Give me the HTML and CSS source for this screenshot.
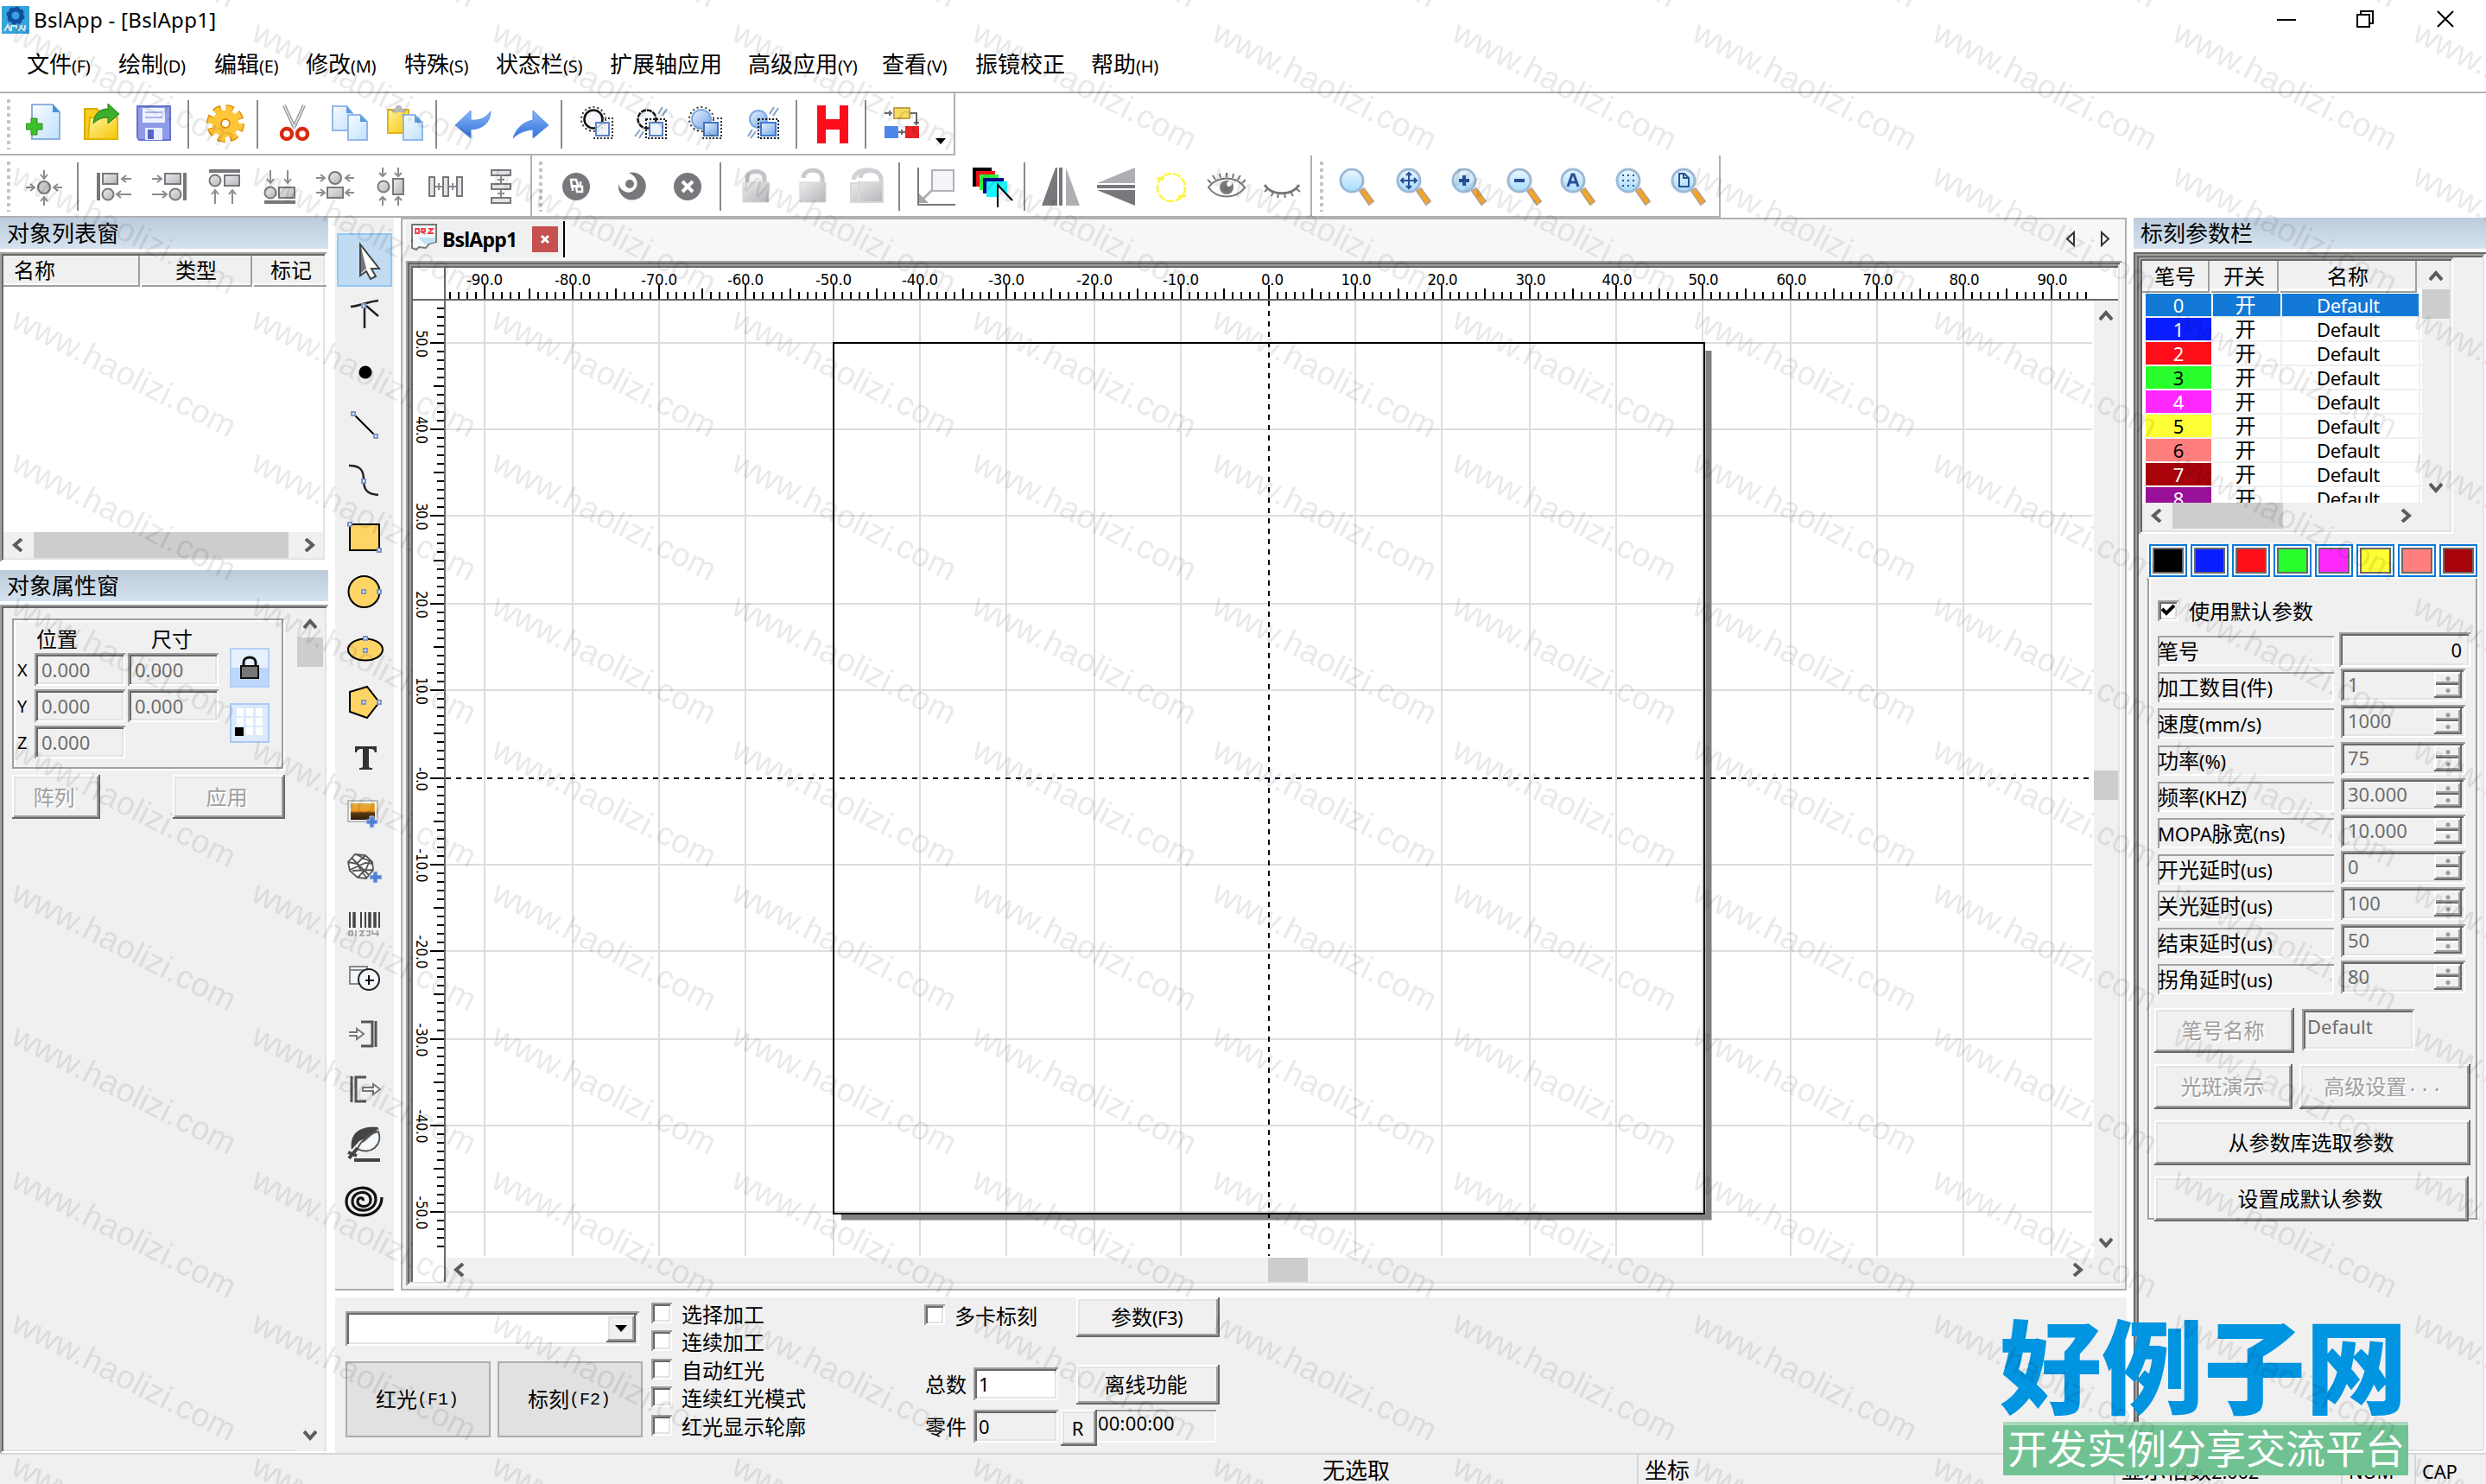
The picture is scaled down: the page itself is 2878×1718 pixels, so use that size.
FILE: index.html
```html
<!DOCTYPE html>
<html lang="zh-CN">
<head>
<meta charset="utf-8">
<title>BslApp - [BslApp1]</title>
<link rel="stylesheet" href="styles.css">
</head>
<body>
<svg width="0" height="0" class="defs">
  <defs>
    <linearGradient id="lens" x1="0" y1="0" x2="0" y2="1"><stop offset="0" stop-color="#eaf7ff"/><stop offset="1" stop-color="#a5dcfb"/></linearGradient>
    <linearGradient id="sheet" x1="0" y1="0" x2="1" y2="1"><stop offset="0" stop-color="#fafdff"/><stop offset="1" stop-color="#bfe0ff"/></linearGradient>
    <linearGradient id="gold" x1="0" y1="0" x2="1" y2="1"><stop offset="0" stop-color="#fff3a0"/><stop offset="1" stop-color="#f7c600"/></linearGradient>
    <linearGradient id="blue" x1="0" y1="0" x2="0" y2="1"><stop offset="0" stop-color="#8ab8fb"/><stop offset="1" stop-color="#2f6fd6"/></linearGradient>
    <linearGradient id="sky" x1="0" y1="0" x2="1" y2="1"><stop offset="0" stop-color="#eaf3fe"/><stop offset="1" stop-color="#6fa3ea"/></linearGradient>
    <linearGradient id="steel" x1="0" y1="0" x2="1" y2="1"><stop offset="0" stop-color="#ececee"/><stop offset="1" stop-color="#b4b5b8"/></linearGradient>
    <linearGradient id="sunset" x1="0" y1="0" x2="0" y2="1"><stop offset="0" stop-color="#e0b040"/><stop offset=".45" stop-color="#f59a20"/><stop offset=".6" stop-color="#5a3a10"/><stop offset="1" stop-color="#2a1c0c"/></linearGradient>
    <symbol id="mag" viewBox="0 0 44 46" overflow="visible">
      <path d="M24 27l5-3 11 15-5 4z" fill="#f9a51a" stroke="#b9a38a" stroke-width="2"/>
      <circle cx="15" cy="15" r="13" fill="url(#lens)" stroke="#9db9d6" stroke-width="3"/>
    </symbol>
    <symbol id="hd" viewBox="0 0 6 6"><path d="M1 1h4v4h-4z" fill="#fff" stroke="#7a96d2" stroke-width="2"/></symbol>
  </defs>
</svg>

<header class="titlebar">
  <svg class="logo" width="32" height="32" viewBox="0 0 32 32"><path fill="#35a3dc" d="M0 0h32v32H0z"/><circle cx="16" cy="11" r="7" fill="none" stroke="#124f9c" stroke-width="5"/><circle cx="16" cy="11" r="9" fill="none" stroke="#124f9c" stroke-width="3" stroke-dasharray="4 3"/><path d="M3 29l4-7 3 7M11 22v7M12 23h5v3M19 29l5-7M21 23l6 6M27 22v5" stroke="#d5e4ee" stroke-width="2" fill="none"/></svg>
  <span class="caption">BslApp - [BslApp1]</span>
  <svg class="winbtns" width="220" height="30" viewBox="2634 8 220 30" fill="none" stroke="#000" stroke-width="2"><path d="M2636 23h22"/><path d="M2729 17h14v14h-14zM2733 17v-4h14v14h-4"/><path d="M2822 13l18 18M2840 13l-18 18"/></svg>
</header>

<nav class="menubar">
  <span>文件<small>(F)</small></span><span>绘制<small>(D)</small></span><span>编辑<small>(E)</small></span><span>修改<small>(M)</small></span><span>特殊<small>(S)</small></span><span>状态栏<small>(S)</small></span><span>扩展轴应用</span><span>高级应用<small>(Y)</small></span><span>查看<small>(V)</small></span><span>振镜校正</span><span>帮助<small>(H)</small></span>
</nav>

<div class="toolbar main-tools">
  <i class="grip"></i>
  <svg width="44" height="56" viewBox="30 116 44 56"><path d="M37 121h24l8 9v31H37z" fill="url(#sheet)" stroke="#8fb0dc" stroke-width="2"/><path d="M61 121v9h8z" fill="#4a90d9"/><path d="M36 137h7v6h6v7h-6v6h-7v-6h-6v-7h6z" fill="#3fc02d" stroke="#2a8d1e"/></svg>
  <svg width="46" height="56" viewBox="96 116 46 56"><path d="M98 126h14l4 4h18v31H98z" fill="#f7cf1d" stroke="#d9a800" stroke-width="2"/><path d="M104 136h32v25h-34z" fill="url(#gold)" stroke="#e2b400" stroke-width="2"/><path d="M108 143c1-12 8-17 17-17v-6l13 12-13 11v-7c-7 0-12 2-17 7z" fill="#3cae2c" stroke="#217a18"/></svg>
  <svg width="44" height="56" viewBox="156 116 44 56"><path d="M159 123h38v39h-36l-2-3z" fill="#8f9be6" stroke="#6673cc" stroke-width="2"/><path d="M165 125h26v17h-26z" fill="#eef2ff"/><path d="M168 130h20M168 136h20" stroke="#a9b4ee" stroke-width="2"/><path d="M168 148h20v14h-20z" fill="#e8ecff"/><path d="M171 150h7v11h-7z" fill="#5663c8"/></svg>
  <i class="sep"></i>
  <svg width="50" height="56" viewBox="236 116 50 56"><circle cx="261" cy="143" r="17" fill="none" stroke="#e08a00" stroke-width="10" stroke-dasharray="8 5.35"/><circle cx="261" cy="143" r="17" fill="none" stroke="#ffc63a" stroke-width="7" stroke-dasharray="7 6.35"/><circle cx="261" cy="143" r="10.500" fill="none" stroke="#ffc63a" stroke-width="10"/><circle cx="261" cy="143" r="5" fill="#fff" stroke="#e08a00" stroke-width="2"/></svg>
  <i class="sep"></i>
  <svg width="44" height="56" viewBox="320 116 44 56"><path d="M329 122l12 26M352 122l-12 26" stroke="#8e8e8e" stroke-width="4"/><path d="M329 122l12 26M352 122l-12 26" stroke="#eee" stroke-width="1.500"/><circle cx="332" cy="155" r="6" fill="none" stroke="#d92a10" stroke-width="4.500"/><circle cx="350" cy="155" r="6" fill="none" stroke="#d92a10" stroke-width="4.500"/></svg>
  <svg width="48" height="56" viewBox="382 116 48 56"><path d="M385 123h16l7 8v20h-23z" fill="url(#sheet)" stroke="#93b7e8" stroke-width="2"/><path d="M403 133h14l8 8v21h-22z" fill="url(#sheet)" stroke="#93b7e8" stroke-width="2"/><path d="M401 122v9h7zM417 133v8h8z" fill="#5b9be4"/></svg>
  <svg width="48" height="56" viewBox="446 116 48 56"><path d="M449 127h24v27h-24z" fill="url(#gold)" stroke="#e0b21c" stroke-width="2"/><path d="M454 130c0-5 4-3 5-8h5c1 5 5 3 5 8z" fill="#b9b9b9"/><path d="M467 133h13l9 9v20h-22z" fill="url(#sheet)" stroke="#93b7e8" stroke-width="2"/><path d="M480 133v9h9z" fill="#5b9be4"/></svg>
  <i class="sep"></i>
  <svg width="48" height="56" viewBox="524 116 48 56"><path d="M527 145l18-17v11c10 1 17-2 23-10-1 13-8 20-23 21v10z" fill="url(#blue)" stroke="#5b8fe6"/></svg>
  <svg width="48" height="56" viewBox="590 116 48 56"><path d="M635 145l-18-17v11c-10 2-19 8-23 21 6-6 13-9 23-10v10z" fill="url(#blue)" stroke="#5b8fe6"/></svg>
  <i class="sep"></i>
  <svg width="44" height="56" viewBox="669 116 44 56"><circle cx="687" cy="138" r="14" fill="none" stroke="#333" stroke-width="2" stroke-dasharray="2 3"/><circle cx="687" cy="138" r="10.500" fill="#f3f6fb" stroke="#111" stroke-width="2.500"/><path d="M690 142h15v15h-15z" fill="#eaf1fb" fill-opacity=".8" stroke="#5a84c4" stroke-width="2"/><path d="M704 137h5v23h-24" fill="none" stroke="#333" stroke-width="2" stroke-dasharray="2 2"/></svg>
  <svg width="44" height="56" viewBox="733 116 44 56"><circle cx="749" cy="138" r="10.500" fill="#f3f6fb" stroke="#111" stroke-width="2.500" stroke-dasharray="6 1"/><path d="M752 142h15v15h-15z" fill="#eaf1fb" stroke="#5a84c4" stroke-width="2"/><path d="M748 138h23v22h-23z" fill="none" stroke="#111" stroke-width="2" stroke-dasharray="2 2"/><path d="M767 124l-5 8M772 126l-5 8M741 150l-6 8M745 152l-5 8" stroke="#86a0c8" stroke-width="2"/></svg>
  <svg width="44" height="56" viewBox="795 116 44 56"><circle cx="812" cy="138" r="14" fill="none" stroke="#333" stroke-width="2" stroke-dasharray="2 3"/><circle cx="812" cy="138" r="11" fill="url(#sky)" stroke="#7da9e6" stroke-width="2"/><path d="M815 142h16v15h-16z" fill="url(#sky)" stroke="#4672b8" stroke-width="2"/><path d="M830 137h5v23h-24" fill="none" stroke="#333" stroke-width="2" stroke-dasharray="2 2"/></svg>
  <svg width="44" height="56" viewBox="863 116 44 56"><circle cx="878" cy="138" r="10" fill="url(#sky)" stroke="#7da9e6" stroke-width="2"/><path d="M881 142h17v15h-17z" fill="url(#sky)" stroke="#3f78cf" stroke-width="2"/><path d="M878 138h23v22h-23z" fill="none" stroke="#111" stroke-width="2" stroke-dasharray="2 2"/><path d="M896 124l-5 8M901 125l-6 9M871 150l-5 8M875 152l-6 8" stroke="#86a0c8" stroke-width="2"/></svg>
  <i class="sep"></i>
  <svg width="44" height="56" viewBox="942 116 44 56"><path d="M946 122h10v16h16v-16h10v44h-10v-16h-16v16h-10z" fill="#fb0d1b"/></svg>
  <i class="sep"></i>
  <svg width="78" height="56" viewBox="1022 116 78 56"><path d="M1035 125h18v12h-18z" fill="#f8dd5d" stroke="#c7a04c" stroke-width="2"/><path d="M1024 146h16v14h-16z" fill="#4f86ea"/><path d="M1048 146h16v14h-16z" fill="#ea2323"/><path d="M1024 131h9M1030 128v6M1054 131h7v14M1040 153h8M1044 150v6M1058 142h6" stroke="#666" stroke-width="2" fill="none"/><path d="M1083 160h12l-6 7z" fill="#000"/></svg>
</div>

<div class="toolbar-row">
<div class="toolbar align-tools">
  <i class="grip"></i>
  <svg width="46" height="56" viewBox="28 188 46 56"><circle cx="51" cy="217" r="7" fill="#c9cacc" stroke="#77787b" stroke-width="2"/><path d="M51 197v9M47 202l4 5 4-5M51 238v-9M47 233l4-5 4 5M30 217h9M35 213l5 4-5 4M72 217h-9M67 213l-5 4 5 4" fill="none" stroke="#8b8c8f" stroke-width="2"/></svg>
  <i class="sep"></i>
  <svg width="46" height="56" viewBox="111 188 46 56"><path d="M114 200v32" stroke="#77787b" stroke-width="4"/><path d="M119 201h17v12h-17z" fill="url(#steel)" stroke="#77787b" stroke-width="2"/><circle cx="125" cy="225" r="6.500" fill="url(#steel)" stroke="#77787b" stroke-width="2"/><path d="M152 207h-10M146 203l-5 4 5 4M152 225h-16M140 221l-5 4 5 4" fill="none" stroke="#8b8c8f" stroke-width="2"/></svg>
  <svg width="46" height="56" viewBox="174 188 46 56"><path d="M214 200v32" stroke="#77787b" stroke-width="4"/><path d="M191 201h18v12h-18z" fill="url(#steel)" stroke="#77787b" stroke-width="2"/><circle cx="203" cy="225" r="6.500" fill="url(#steel)" stroke="#77787b" stroke-width="2"/><path d="M176 207h10M182 203l5 4-5 4M176 225h16M188 221l5 4-5 4" fill="none" stroke="#8b8c8f" stroke-width="2"/></svg>
  <svg width="46" height="56" viewBox="240 188 46 56"><path d="M242 198h36" stroke="#77787b" stroke-width="4"/><path d="M260 203h17v12h-17z" fill="url(#steel)" stroke="#77787b" stroke-width="2"/><circle cx="249" cy="209" r="6.500" fill="url(#steel)" stroke="#77787b" stroke-width="2"/><path d="M249 236v-14M245 225l4-5 4 5M269 236v-14M265 225l4-5 4 5" fill="none" stroke="#8b8c8f" stroke-width="2"/></svg>
  <svg width="46" height="56" viewBox="303 188 46 56"><path d="M306 234h36" stroke="#77787b" stroke-width="4"/><path d="M323 217h18v12h-18z" fill="url(#steel)" stroke="#77787b" stroke-width="2"/><circle cx="313" cy="223" r="6.500" fill="url(#steel)" stroke="#77787b" stroke-width="2"/><path d="M313 197v14M309 207l4 5 4-5M333 197v14M329 207l4 5 4-5" fill="none" stroke="#8b8c8f" stroke-width="2"/></svg>
  <svg width="50" height="56" viewBox="364 188 50 56"><circle cx="388" cy="206" r="7" fill="url(#steel)" stroke="#77787b" stroke-width="2"/><path d="M379 217h18v12h-18z" fill="url(#steel)" stroke="#77787b" stroke-width="2"/><path d="M366 206h9M371 202l5 4-5 4M410 206h-9M405 202l-5 4 5 4M366 223h9M371 219l5 4-5 4M410 223h-9M405 219l-5 4 5 4" fill="none" stroke="#8b8c8f" stroke-width="2"/></svg>
  <svg width="46" height="56" viewBox="433 188 46 56"><circle cx="444" cy="216" r="6.500" fill="url(#steel)" stroke="#77787b" stroke-width="2"/><path d="M455 207h12v18h-12z" fill="url(#steel)" stroke="#77787b" stroke-width="2"/><path d="M443 194v9M439 200l4 4 4-4M461 194v9M457 200l4 4 4-4M443 238v-9M439 232l4-4 4 4M461 238v-9M457 232l4-4 4 4" fill="none" stroke="#8b8c8f" stroke-width="2"/></svg>
  <svg width="46" height="56" viewBox="493 188 46 56"><path d="M497 205h6v22h-6zM513 205h6v22h-6zM529 205h6v22h-6z" fill="#e4e4e6" stroke="#77787b" stroke-width="2"/><path d="M504 216h8M520 216h8M508 212v8M524 212v8" stroke="#8b8c8f" stroke-width="2"/></svg>
  <svg width="44" height="56" viewBox="560 188 44 56"><path d="M569 197h22v6h-22zM569 213h22v6h-22zM569 229h22v6h-22z" fill="#e4e4e6" stroke="#77787b" stroke-width="2"/><path d="M580 204v8M580 220v8M576 208h8M576 224h8" stroke="#8b8c8f" stroke-width="2"/></svg>
</div>
<div class="toolbar edit-tools">
  <i class="grip"></i>
  <svg width="40" height="56" viewBox="648 188 40 56"><circle cx="667" cy="216" r="16" fill="#77787b"/><path d="M661 208h6l2 6-7 2zM667 216h7v6h-6zM663 214v7M672 210v6" fill="none" stroke="#fff" stroke-width="2.500"/></svg>
  <svg width="40" height="56" viewBox="713 188 40 56"><path d="M728 200a16 16 0 1 1-12 13c2 8 12 13 18 7 6-5 5-15-6-20z" fill="#77787b"/><circle cx="729" cy="213" r="5" fill="#77787b"/></svg>
  <svg width="40" height="56" viewBox="777 188 40 56"><circle cx="796" cy="216" r="16" fill="#77787b"/><path d="M790 210l12 12M802 210l-12 12" stroke="#fff" stroke-width="4"/></svg>
  <i class="sep"></i>
  <svg width="40" height="56" viewBox="856 188 40 56"><path d="M865 212v-6c0-10 20-10 20 0v6" fill="#f6f6f8" stroke="#c3c4c8" stroke-width="5"/><path d="M860 211h30v23h-30z" fill="url(#steel)" stroke="#d5d5d8"/></svg>
  <svg width="40" height="56" viewBox="922 188 40 56"><path d="M930 206c0-12 22-12 22 0v6" fill="none" stroke="#c9cacd" stroke-width="5"/><path d="M926 211h30v23h-30z" fill="url(#steel)" stroke="#d5d5d8"/></svg>
  <svg width="44" height="56" viewBox="982 188 44 56"><path d="M988 208c2-9 10-12 20-11" fill="none" stroke="#d3d4d6" stroke-width="5"/><path d="M996 206c0-12 24-12 24 2v4" fill="none" stroke="#cfd0d3" stroke-width="5"/><path d="M985 212h10v22h-10zM994 211h28v23h-28z" fill="url(#steel)" stroke="#d9d9dc" stroke-width="2"/></svg>
  <i class="sep"></i>
  <svg width="48" height="56" viewBox="1060 188 48 56"><path d="M1063 194v43h43" fill="none" stroke="#77787b" stroke-width="2"/><path d="M1079 197h25v24h-25z" fill="#f4f5f8" stroke="#b0b1b5" stroke-width="2"/><path d="M1079 220l-12 12" stroke="#b0b1b5" stroke-width="3"/><path d="M1064 224v11h11z" fill="#a5a6aa"/></svg>
  <svg width="50" height="56" viewBox="1124 188 50 56"><path d="M1126 194h22v22h-22z"/><path d="M1130 198h22v18h-22z" fill="#fb0d1b"/><path d="M1134 202h22v18h-22z" fill="#2bf53a"/><path d="M1138 206h24v18h-24z" fill="#04048a"/><path d="M1142 210h24v18h-24z" fill="#19f6fb"/><path d="M1155 214v26l6-7h11v-1z" fill="#f6f8fb"/><path d="M1155 240v-26l17 18" fill="none" stroke="#000" stroke-width="2"/></svg>
  <i class="sep"></i>
  <svg width="50" height="56" viewBox="1203 188 50 56"><path d="M1222 194v44h-16z" fill="#77787b"/><path d="M1234 194v44h16z" fill="#aeafb2"/><path d="M1228 194v44" stroke="#77787b" stroke-width="4"/><path d="M1222 194h2v44h-2z" fill="#77787b"/></svg>
  <svg width="50" height="56" viewBox="1267 188 50 56"><path d="M1314 194v18h-44z" fill="#aeafb2"/><path d="M1270 220h44v18z" fill="#77787b"/><path d="M1270 216h44" stroke="#77787b" stroke-width="4"/></svg>
  <svg width="46" height="56" viewBox="1333 188 46 56"><circle cx="1356" cy="217" r="16" fill="none" stroke="#fdf53a" stroke-width="2.500" stroke-dasharray="9 2"/><path d="M1339 207h7v-3M1373 227h-7v4" fill="none" stroke="#fdf53a" stroke-width="3"/></svg>
  <svg width="50" height="56" viewBox="1395 188 50 56"><path d="M1399 217c10-14 32-14 42 0-10 14-32 14-42 0z" fill="#fff" stroke="#77787b" stroke-width="2"/><circle cx="1420" cy="217" r="8" fill="#77787b"/><circle cx="1423" cy="213" r="3" fill="#fff"/><path d="M1402 212l-4-4M1407 208l-3-5M1413 206l-1-5M1420 205v-5M1427 206l1-5M1433 208l3-5M1438 212l4-4" stroke="#77787b" stroke-width="2"/></svg>
  <svg width="50" height="56" viewBox="1459 188 50 56"><path d="M1464 214c8 13 32 13 40 0" fill="none" stroke="#77787b" stroke-width="3"/><path d="M1468 218l-4 4M1474 222l-2 5M1480 224l-1 5M1487 224l1 5M1494 222l3 5M1500 218l5 4" stroke="#77787b" stroke-width="2"/></svg>
</div>
<div class="toolbar zoom-tools">
  <i class="grip"></i>
  <svg width="44" height="46"><use href="#mag" width="44" height="46"/></svg>
  <svg width="44" height="46"><use href="#mag" width="44" height="46"/><path d="M15 6v18M6 15h18M12 9l3-3 3 3M12 21l3 3 3-3M9 12l-3 3 3 3M21 12l3 3-3 3" fill="none" stroke="#2b4f96" stroke-width="2"/></svg>
  <svg width="44" height="46"><use href="#mag" width="44" height="46"/><path d="M15 9v12M9 15h12" stroke="#2b4f96" stroke-width="4"/></svg>
  <svg width="44" height="46"><use href="#mag" width="44" height="46"/><path d="M9 15h12" stroke="#2b4f96" stroke-width="4"/></svg>
  <svg width="44" height="46"><use href="#mag" width="44" height="46"/><path d="M9 22l5-14h2l5 14M11 17h8" fill="none" stroke="#2b4f96" stroke-width="3"/></svg>
  <svg width="44" height="46"><use href="#mag" width="44" height="46"/><path d="M8 9h16M8 15h16M8 21h16" stroke="#2b4f96" stroke-width="2" stroke-dasharray="2 4"/></svg>
  <svg width="44" height="46"><use href="#mag" width="44" height="46"/><path d="M10 7h6l5 5v10H10zM15 7v5h6" fill="none" stroke="#2b4f96" stroke-width="2"/></svg>
</div>
</div>

<main class="workspace">
  <aside class="left">
    <h2 class="dock-title">对象列表窗</h2>
    <section class="objlist sunken">
      <div class="thead"><span>名称</span><span>类型</span><span>标记</span></div>
      <div class="hscroll"><svg width="14" height="16" viewBox="0 0 14 16"><path d="M12 1L4 8l8 7"/></svg><i class="thumb"></i><svg width="14" height="16" viewBox="0 0 14 16"><path d="M2 1l8 7-8 7"/></svg></div>
    </section>
    <h2 class="dock-title second">对象属性窗</h2>
    <section class="props sunken">
      <div class="props-body">
        <div class="geom">
          <div class="coords">
            <b></b><em>位置</em><em>尺寸</em>
            <b>X</b><span class="field sunken">0.000</span><span class="field sunken">0.000</span>
            <b>Y</b><span class="field sunken">0.000</span><span class="field sunken">0.000</span>
            <b>Z</b><span class="field sunken">0.000</span>
          </div>
          <div class="geom-btns">
            <svg width="46" height="46" viewBox="0 0 46 46"><path d="M1 1h44v44H1z" fill="#e6f0fe" stroke="#b4d0f7" stroke-width="2"/><path d="M2 23h42v21H2z" fill="#bcd7fb"/><path d="M13 21h20v14H13z" fill="#777" stroke="#111" stroke-width="2"/><path d="M16 21v-4c0-8 14-8 14 0v4" fill="none" stroke="#111" stroke-width="3"/></svg>
            <svg width="46" height="46" viewBox="0 0 46 46"><path d="M1 1h44v44H1z" fill="#dceafd" stroke="#a9c9f6" stroke-width="2"/><path d="M8 6h8v9H8zM19 6h8v9h-8zM30 6h8v9h-8zM8 17h8v9H8zM19 17h8v9h-8zM30 17h8v9h-8zM19 28h8v9h-8zM30 28h8v9h-8z" fill="#fff"/><path d="M6 28h10v10H6z"/></svg>
          </div>
        </div>
        <div class="props-actions"><span class="btn raised off">阵列</span><span class="btn raised off">应用</span></div>
      </div>
      <div class="vscroll"><svg width="16" height="14" viewBox="0 0 16 14"><path d="M1 11l7-8 7 8"/></svg><i class="thumb"></i><svg width="16" height="14" viewBox="0 0 16 14"><path d="M1 3l7 8 7-8"/></svg></div>
    </section>
  </aside>

  <div class="middle">
    <div class="upper">
      <div class="drawbar">
        <svg class="on" viewBox="390 270 64 62"><path d="M417 283v36l7-5 5 9 6-3-5-9h9z" fill="#fff" stroke="#444" stroke-width="2"/><path d="M418 286v30l6-5z" fill="#777"/></svg>
        <svg viewBox="390 332 64 64"><path d="M406 355c12-1 20-6 32-7M422 352v28M424 354l14 12" fill="none" stroke="#222" stroke-width="2.500"/><use href="#hd" x="418" y="351" width="6" height="6"/></svg>
        <svg viewBox="390 396 64 64"><circle cx="423" cy="431" r="7.500"/></svg>
        <svg viewBox="390 460 64 64"><path d="M409 479l26 26" stroke="#000" stroke-width="2"/><use href="#hd" x="406" y="476" width="6" height="6"/><use href="#hd" x="432" y="502" width="6" height="6"/></svg>
        <svg viewBox="390 524 64 64"><path d="M404 539c13 0 17 5 17 17s5 16 17 17" fill="none" stroke="#222" stroke-width="2.500"/><use href="#hd" x="418" y="554" width="6" height="6"/></svg>
        <svg viewBox="390 588 64 64"><path d="M405 607h34v30h-34z" fill="#fed465" stroke="#000" stroke-width="2"/><use href="#hd" x="402" y="604" width="6" height="6"/><use href="#hd" x="436" y="634" width="6" height="6"/></svg>
        <svg viewBox="390 652 64 64"><circle cx="421.500" cy="685" r="18" fill="#fed465" stroke="#000" stroke-width="2"/><use href="#hd" x="418" y="682" width="6" height="6"/><use href="#hd" x="436" y="682" width="6" height="6"/></svg>
        <svg viewBox="390 716 64 64"><ellipse cx="423" cy="752" rx="20" ry="12.500" fill="#fed465" stroke="#000" stroke-width="2"/><use href="#hd" x="420" y="736" width="6" height="6"/><use href="#hd" x="420" y="750" width="6" height="6"/></svg>
        <svg viewBox="390 780 64 64"><path d="M405 801l20-6 14 18-14 18-20-7z" fill="#fed465" stroke="#000" stroke-width="2"/><use href="#hd" x="418" y="810" width="6" height="6"/><use href="#hd" x="436" y="810" width="6" height="6"/></svg>
        <svg viewBox="390 844 64 64"><path d="M411 864h25v7h-2c-1-4-3-4-7-4v20c0 2 2 2 4 2v2h-15v-2c2 0 4 0 4-2v-20c-4 0-6 0-7 4h-2z" fill="#333"/></svg>
        <svg viewBox="390 908 64 64"><path d="M403 927h34v24h-34z" fill="#f7f7f7" stroke="#bbb" stroke-width="2"/><path d="M406 930h28v19h-28z" fill="url(#sunset)"/><path d="M424 949h4v-4h5v4h4v5h-4v4h-5v-4h-4z" fill="#4f7fd8" stroke="#c9d6ef"/></svg>
        <svg viewBox="390 972 64 64"><path d="M403 998l8-9 12 1 8 8 1 9-8 10-10-1-9-8zM403 998l10 2 10-10M413 1000l11 16M408 1008l24-1M412 989l20 10M405 1007l18-8 9 1M414 1016l10-10 4-10M407 993l20 20" fill="#fff" stroke="#555" stroke-width="1.800"/><path d="M428 1013h4v-4h5v4h5v5h-5v4h-5v-4h-4z" fill="#4f7fd8" stroke="#c9d6ef"/></svg>
        <svg viewBox="390 1036 64 64"><path d="M405 1056v18M418 1056v18M423 1056v18M439 1056v18" stroke="#444" stroke-width="2"/><path d="M410 1056v18M428 1056v18M434 1056v18" stroke="#444" stroke-width="3.500"/><path d="M404 1078h4v5h-4zM412 1077v7M416 1078h5l-4 5h5M424 1078h4v5h-4M431 1077v4h8M437 1077v7" fill="none" stroke="#999" stroke-width="1.500"/></svg>
        <svg viewBox="390 1100 64 64"><path d="M405 1119h20v20h-20z" fill="#f3f6fb" stroke="#888" stroke-width="2"/><path d="M405 1123h20" stroke="#888" stroke-width="2"/><circle cx="427" cy="1134" r="12" fill="#f3f6fb" stroke="#222" stroke-width="2"/><path d="M427 1129v11M423 1135h10" stroke="#000" stroke-width="2"/></svg>
        <svg viewBox="390 1164 64 64"><path d="M418 1183h13v28h-13M435 1182v30" fill="none" stroke="#555" stroke-width="3"/><path d="M404 1195h9v-4l8 6-8 6v-4h-9" fill="#fff" stroke="#777" stroke-width="2"/></svg>
        <svg viewBox="390 1228 64 64"><path d="M424 1247h-12v28h12M407 1246v30" fill="none" stroke="#555" stroke-width="3"/><path d="M420 1259h12v-4l8 6-8 6v-4h-12z" fill="#fff" stroke="#777" stroke-width="2"/></svg>
        <svg viewBox="390 1292 64 64"><path d="M438 1305c-18-2-34 4-31 26l9-10 12-6z" fill="#444"/><path d="M414 1330c4-10 14-18 24-20 6 16-10 28-24 20z" fill="#f4f7fb" stroke="#555" stroke-width="2"/><path d="M420 1322l18-16" stroke="#555" stroke-width="2"/><path d="M403 1334l10 4M404 1341l10-12M410 1343h30" stroke="#444" stroke-width="4"/></svg>
        <svg viewBox="391 1356 64 64"><path d="M421 1390c2-4-6-5-6 1 0 8 16 8 15-3-1-11-21-10-21 3 0 14 27 14 27-3 0-18-34-17-34 3 0 22 41 22 41-5" fill="none" stroke="#111" stroke-width="3.200"/></svg>
      </div>

      <div class="document">
        <div class="tabs">
          <div class="tab">
            <svg width="30" height="32" viewBox="0 0 30 32"><path d="M1 1h28v20l-8 2-4 5-8-1-3 3-5-2z" fill="#f5f9fc" stroke="#777" stroke-width="2"/><path d="M8 16h20v5l-12 3z" fill="#bfe3f2"/><path d="M5 6h4v5H5zM12 11V6h4v3h-4l4 3M20 6h5l-5 5h6" fill="none" stroke="#f0404a" stroke-width="1.800"/></svg>
            <strong>BslApp1</strong>
            <svg class="close" width="30" height="30" viewBox="0 0 30 30"><path fill="#c75050" d="M0 0h30v30H0z"/><path d="M11 11l8 8M19 11l-8 8" stroke="#fff" stroke-width="3"/></svg>
          </div>
          <svg width="52" height="20" viewBox="2392 266 52 20" fill="none" stroke="#333" stroke-width="2"><path d="M2401 268v15l-8-7.500zM2433 268v15l8-7.500z"/></svg>
        </div>
        <div class="view">
          <svg id="hruler" class="hruler" viewBox="478 310 1974 38"></svg>
          <svg id="vruler" class="vruler" viewBox="478 348 38 1136"></svg>
          <svg id="canvas" class="canvas" viewBox="516 348 1908 1108"></svg>
          <div class="vscroll"><svg width="16" height="14" viewBox="0 0 16 14"><path d="M1 11l7-8 7 8"/></svg><i class="thumb"></i><svg width="16" height="14" viewBox="0 0 16 14"><path d="M1 3l7 8 7-8"/></svg></div>
          <div class="hscroll"><svg width="14" height="16" viewBox="0 0 14 16"><path d="M12 1L4 8l8 7"/></svg><i class="thumb"></i><svg width="14" height="16" viewBox="0 0 14 16"><path d="M2 1l8 7-8 7"/></svg></div>
        </div>
      </div>
    </div>

    <div class="marking">
      <div class="run">
        <div class="combo sunken"><span class="raised"><svg width="14" height="8" viewBox="0 0 14 8"><path d="M0 0h14L7 8z"/></svg></span></div>
        <div class="run-btns"><span class="flat">红光<tt>(F1)</tt></span><span class="flat">标刻<tt>(F2)</tt></span></div>
      </div>
      <div class="checks">
        <label><i class="box sunken"></i>选择加工</label>
        <label><i class="box sunken"></i>连续加工</label>
        <label><i class="box sunken"></i>自动红光</label>
        <label><i class="box sunken"></i>连续红光模式</label>
        <label><i class="box sunken"></i>红光显示轮廓</label>
      </div>
      <div class="counts">
        <label><i class="box sunken"></i>多卡标刻</label>
        <div class="count"><span>总数</span><span class="field sunken white">1</span></div>
        <div class="count"><span>零件</span><span class="field sunken">0</span></div>
      </div>
      <div class="extra">
        <span class="btn raised">参数<u>(F3)</u></span>
        <span class="btn raised">离线功能</span>
        <div class="timer"><span class="btn raised">R</span><span class="time">00:00:00</span></div>
      </div>
    </div>
  </div>

  <aside class="right">
    <h2 class="dock-title">标刻参数栏</h2>
    <section class="params">
      <div class="pens sunken">
        <div class="pens-main">
          <div class="thead"><span>笔号</span><span>开关</span><span>名称</span></div>
          <div class="rows">
            <div class="row sel"><span>0</span><span>开</span><span>Default</span></div>
            <div class="row"><span class="c1">1</span><span>开</span><span>Default</span></div>
            <div class="row"><span class="c2">2</span><span>开</span><span>Default</span></div>
            <div class="row"><span class="c3">3</span><span>开</span><span>Default</span></div>
            <div class="row"><span class="c4">4</span><span>开</span><span>Default</span></div>
            <div class="row"><span class="c5">5</span><span>开</span><span>Default</span></div>
            <div class="row"><span class="c6">6</span><span>开</span><span>Default</span></div>
            <div class="row"><span class="c7">7</span><span>开</span><span>Default</span></div>
            <div class="row"><span class="c8">8</span><span>开</span><span>Default</span></div>
          </div>
          <div class="hscroll"><svg width="14" height="16" viewBox="0 0 14 16"><path d="M12 1L4 8l8 7"/></svg><i class="thumb"></i><svg width="14" height="16" viewBox="0 0 14 16"><path d="M2 1l8 7-8 7"/></svg></div>
        </div>
        <div class="vscroll"><svg width="16" height="14" viewBox="0 0 16 14"><path d="M1 11l7-8 7 8"/></svg><i class="thumb"></i><svg width="16" height="14" viewBox="0 0 16 14"><path d="M1 3l7 8 7-8"/></svg></div>
      </div>
      <div class="swatches"><i class="c0"></i><i class="c1"></i><i class="c2"></i><i class="c3"></i><i class="c4"></i><i class="c5"></i><i class="c6"></i><i class="c7"></i></div>
      <div class="group">
        <label class="default"><i class="box sunken"><svg width="16" height="16" viewBox="0 0 16 16"><path d="M1 6l5 5 9-9" fill="none" stroke="#000" stroke-width="4"/></svg></i>使用默认参数</label>
        <div class="param first"><span>笔号</span><span class="field sunken">0</span></div>
        <div class="param"><span>加工数目<u>(</u>件<u>)</u></span><span class="field sunken">1<i class="spin"></i></span></div>
        <div class="param"><span>速度<u>(mm/s)</u></span><span class="field sunken">1000<i class="spin"></i></span></div>
        <div class="param"><span>功率<u>(%)</u></span><span class="field sunken">75<i class="spin"></i></span></div>
        <div class="param"><span>频率<u>(KHZ)</u></span><span class="field sunken">30.000<i class="spin"></i></span></div>
        <div class="param"><span><u>MOPA</u>脉宽<u>(ns)</u></span><span class="field sunken">10.000<i class="spin"></i></span></div>
        <div class="param"><span>开光延时<u>(us)</u></span><span class="field sunken">0<i class="spin"></i></span></div>
        <div class="param"><span>关光延时<u>(us)</u></span><span class="field sunken">100<i class="spin"></i></span></div>
        <div class="param"><span>结束延时<u>(us)</u></span><span class="field sunken">50<i class="spin"></i></span></div>
        <div class="param"><span>拐角延时<u>(us)</u></span><span class="field sunken">80<i class="spin"></i></span></div>
        <div class="line"><span class="btn raised off b1">笔号名称</span><span class="field sunken penname">Default</span></div>
        <div class="line"><span class="btn raised off b2">光斑演示</span><span class="btn raised off b3">高级设置<tt>...</tt></span></div>
        <div class="line"><span class="btn raised b4">从参数库选取参数</span></div>
        <div class="line"><span class="btn raised b5">设置成默认参数</span></div>
      </div>
    </section>
  </aside>
</main>

<footer class="status"><span></span><span>无选取</span><span>坐标</span><span>显示倍数<u>2.002</u></span><span><u>NUM</u></span><span><u>CAP</u></span></footer>

<div class="brand"><b>好例子网</b><span>开发实例分享交流平台</span></div>
<svg class="watermark" width="2878" height="1718">
  <defs><pattern id="wm" x="4" y="8" width="278" height="166" patternUnits="userSpaceOnUse"><text x="0" y="0" transform="translate(7 38) rotate(27)" textLength="285">www.haolizi.com</text></pattern></defs>
  <rect width="2878" height="1718" fill="url(#wm)"/>
</svg>
<script src="script.js"></script>
</body>
</html>
```
FILE: styles.css
```css
* { box-sizing: border-box; }
html, body { margin: 0; }
body {
  position: relative;
  width: 2878px; height: 1718px; overflow: hidden;
  display: flex; flex-direction: column;
  background: #fff; color: #000;
  font: 24px/28px "Noto Sans", "Noto Sans CJK SC", sans-serif;
  white-space: nowrap;
}
svg { display: block; flex: none; }
i, em { font-style: normal; }
u { text-decoration: none; font-size: 22px; letter-spacing: -.600px; }
small { font-size: 20px; letter-spacing: -.300px; }
tt { font: 20px "Liberation Mono", monospace; }
.defs { position: absolute; }

.sunken { box-shadow: inset 2px 2px #a0a0a0, inset -2px -2px #fff, inset 4px 4px #696969, inset -4px -4px #e3e3e3; padding: 4px; }
.raised { box-shadow: inset -2px -2px #696969, inset 2px 2px #fff, inset -4px -4px #a0a0a0, inset 4px 4px #e3e3e3; background: #f0f0f0; }
.btn { display: flex; align-items: center; justify-content: center; padding-right: 3px; }
.off { color: #a0a0a0; text-shadow: 2px 2px #fff; }

.titlebar { height: 50px; flex: none; display: flex; align-items: flex-start; padding: 7px 24px 0 2px; }
.caption { margin-left: 5px; line-height: 32px; letter-spacing: .300px; flex: 1; }
.winbtns { margin-top: 1px; }
.menubar { height: 56px; flex: none; display: grid; grid-template-columns: 106px 111px 106px 114px 106px 132px 160px 155px 108px 134px 120px; padding-left: 31px; font: 26px/48px "Noto Sans", "Noto Sans CJK SC", sans-serif; box-shadow: 0 2px #b0b0b0; position: relative; }

.toolbar { display: grid; height: 72px; border-right: 2px solid #b0b0b0; border-bottom: 2px solid #b0b0b0; padding-top: 8px; flex: none; }
.main-tools { width: 1106px; margin-top: 2px; grid-template-columns: 22px 66px 60px 61px 19px 61px 23px 62px 64px 58px 20px 66px 59px 20px 64px 62px 68px 58px 21px 59px 21px 78px; padding-left: 8px; }
.toolbar-row { display: flex; height: 72px; flex: none; }
.align-tools { width: 616px; padding-left: 8px; grid-template-columns: 20px 61px 22px 63px 66px 63px 61px 69px 60px 67px 44px; }
.edit-tools { width: 903px; padding-left: 8px; grid-template-columns: 24px 65px 64px 56px 23px 66px 60px 58px 20px 64px 61px 18px 64px 66px 62px 64px 50px; }
.zoom-tools { width: 473px; padding-left: 9px; grid-template-columns: 22px 66px 64px 64px 62px 64px 64px 44px; }
.zoom-tools svg { margin-top: 6px; }
.grip { width: 4px; height: 58px; margin-top: -1px; background: repeating-linear-gradient(#c4c4c4 0 4px, transparent 4px 8px); }
.sep { width: 2px; height: 56px; background: #8a8a8a; }

.workspace { flex: none; height: 1430px; display: flex; gap: 8px; }
.dock-title { margin: 0; height: 36px; padding-left: 8px; font: 26px/34px "Noto Sans CJK SC", sans-serif; background: linear-gradient(#bccbdb, #d5e2ef); }
.thead { display: grid; background: #f0f0f0; line-height: 34px; }
.thead span { border-right: 2px solid #a0a0a0; border-bottom: 2px solid #a0a0a0; margin-right: 2px; }
.thumb { background: #cdcdcd; display: block; }
.hscroll, .vscroll { background: #f0f0f0; display: flex; align-items: center; }
.vscroll { flex-direction: column; }
.hscroll path, .vscroll path { fill: none; stroke: #5c5c5c; stroke-width: 4; }
.hscroll .thumb { height: 100%; }
.vscroll .thumb { width: 100%; }

.left { width: 380px; flex: none; }
.objlist { width: 378px; height: 358px; margin-top: 4px; display: flex; flex-direction: column; justify-content: space-between; }
.objlist .thead { grid-template-columns: 160px 130px 84px; height: 32px; }
.objlist .thead span:first-child { padding-left: 12px; }
.objlist .thead span:nth-child(2) { padding-left: 39px; }
.objlist .thead span:nth-child(3) { padding-left: 19px; border-right: 0; margin: 0; }
.objlist .hscroll { height: 30px; padding: 0 8px 0 9px; }
.objlist .thumb { width: 298px; margin: 0 18px 0 12px; }
.dock-title.second { margin-top: 10px; }
.props { width: 380px; height: 982px; margin-top: 4px; background: #f0f0f0; display: flex; padding: 4px 2px 2px 4px; }
.props-body { width: 340px; flex: none; padding: 12px 0 0 10px; }
.geom { width: 314px; height: 174px; border: 2px solid #a0a0a0; box-shadow: inset 2px 2px #fff, 2px 2px #fff; display: flex; padding-left: 5px; }
.coords { display: grid; grid-template-columns: 19px 108px 106px; grid-template-rows: 38px 42px 42px 38px; align-content: start; width: 245px; }
.coords b { font: 20px/40px "Noto Sans", sans-serif; margin-left: -1px; }
.coords em { padding: 8px 0 0 2px; }
.coords em:nth-child(3) { padding-left: 27px; }
.field { display: block; width: 105px; height: 38px; padding: 0 8px; font: 22px/38px "Noto Sans", sans-serif; letter-spacing: 0; color: #6d6d6d; background: #f0f0f0; }
.geom-btns { padding-top: 32px; display: flex; flex-direction: column; gap: 18px; }
.props-actions { display: flex; justify-content: space-between; width: 316px; margin-top: 7px; }
.props-actions .btn { height: 51px; width: 102px; padding-right: 5px; }
.props-actions .btn + .btn { width: 130px; }
.props .vscroll { width: 30px; padding: 12px 0; }
.props .vscroll .thumb { height: 34px; margin: 8px 0 auto; }

.middle { width: 2074px; flex: none; }
.upper { display: flex; gap: 8px; height: 1242px; }
.drawbar { width: 68px; padding: 18px 2px 0; background: #f0f0f0; border-bottom: 2px solid #b0b0b0; }
.drawbar svg { width: 64px; height: 64px; }
.drawbar svg.on { height: 62px; background: #c1dbf3; outline: 2px solid #90c8f6; outline-offset: -2px; }
.document { width: 1998px; border: 2px solid #b0b0b0; background: #f0f0f0; }
.tabs { height: 48px; background: #f7f7f7; display: flex; justify-content: space-between; align-items: center; padding: 2px 16px 4px 4px; }
.tab { width: 184px; height: 42px; background: #f0f0f0; border-right: 2px solid #000; display: flex; align-items: center; padding-left: 6px; }
.tab > svg:first-child { margin-top: -5px; }
.tab strong { width: 110px; padding-left: 6px; font: bold 23px/30px "Noto Sans", sans-serif; letter-spacing: -.800px; }
.view { margin-left: 4px; width: 1986px; height: 1186px; padding: 8px 4px 4px 8px; background: #fff; box-shadow: inset 2px 2px #a0a0a0, inset -2px -2px #fff, inset 4px 4px #696969, inset -4px -4px #e3e3e3, inset 6px 6px #a0a0a0, inset 8px 8px #696969; display: grid; grid-template: 38px 1108px 28px / 38px 1908px 28px; }
.hruler { grid-column: 1 / 4; width: 1974px; height: 38px; }
.vruler { grid-row: 2 / 4; width: 38px; height: 1136px; }
.canvas { width: 1908px; height: 1108px; }
.hruler text, .vruler text { font: 18.500px "DejaVu Sans Condensed", "Noto Sans", sans-serif; text-anchor: middle; }
.vruler text { font-size: 17px; }
.view .vscroll { padding: 11px 0; }
.view .vscroll .thumb { height: 34px; margin: 519px 0 auto; }
.view .hscroll { grid-column: 2 / 4; padding: 0 39px 0 8px; }
.view .hscroll .thumb { width: 46px; margin: 0 auto 0 930px; }

.marking { margin-top: 8px; height: 180px; background: #f0f0f0; display: flex; }
.run { width: 366px; padding: 16px 0 0 12px; }
.combo { width: 340px; height: 40px; background: #fff; display: flex; justify-content: flex-end; }
.combo .raised { width: 34px; display: flex; align-items: center; justify-content: center; }
.run-btns { display: flex; gap: 8px; margin-top: 18px; }
.flat { width: 168px; height: 88px; background: #e1e1e1; border: 2px solid #adadad; display: flex; align-items: center; justify-content: center; padding-right: 2px; }
.box { display: inline-flex; width: 24px; height: 24px; background: #fff; margin-right: 12px; flex: none; }
.checks { width: 316px; padding-top: 5px; }
.marking label { display: flex; height: 32.400px; line-height: 30px; }
.marking label .box { margin-top: 1px; margin-right: 11px; }
.counts { width: 176px; padding-top: 7px; }
.counts label { margin-bottom: 42px; }
.counts .count { display: flex; line-height: 40px; height: 49px; gap: 7px; }
.counts .field { width: 98px; height: 38px; color: #000; padding-left: 6px; }
.count > span:first-child { flex: none; width: 50px; padding-left: 1px; }
.white { background: #fff; }
.extra .btn { width: 166px; height: 46px; }
.extra > .btn + .btn { margin-top: 32px; padding-right: 5px; }
.timer { display: flex; margin: 6px 0 0 -18px; }
.timer .btn { width: 42px; height: 42px; font-size: 22px; }
.time { width: 138px; height: 38px; font-size: 22px; line-height: 31px; padding-left: 1px; letter-spacing: .200px; box-shadow: inset 0 2px #a0a0a0, inset -2px -2px #fff; }

.right { width: 408px; flex: none; }
.params { height: 1390px; margin-top: 4px; padding: 6px 2px 0 6px; background: #f0f0f0; box-shadow: inset 2px 2px #696969, inset -2px -2px #fff, inset 4px 4px #a0a0a0, inset -4px -4px #e3e3e3, inset 6px 6px #696969; }
.pens { width: 364px; height: 320px; display: flex; }
.pens-main { width: 324px; }
.pens .thead { grid-template-columns: 80px 80px 160px; height: 32px; line-height: 35px; text-align: center; }
.rows { height: 248px; overflow: hidden; padding: 4px 0 0 2px; border-top: 2px solid #fff; background: #fff; }
.row { display: grid; grid-template-columns: 80px 80px 160px; height: 28px; line-height: 26px; border-bottom: 2px solid #f0f0f0; text-align: center; }
.row span { border-right: 2px solid #f0f0f0; }
.row span:first-child { margin-left: 2px; font-size: 22px; color: #fff; border-right-color: #fff; }
.row span:nth-child(2) { padding-right: 3px; }
.row span:last-child { font-size: 22px; letter-spacing: -.400px; padding-right: 5px; }
.row.sel span { background: #1379d6; color: #fff; border-right-color: #fff; }
.c0 { background: #000; } .c1 { background: #0a1eff; } .c2 { background: #ff0d18; } .c3 { background: #28ff2d; } .c4 { background: #ff28ff; } .c5 { background: #ffff35; } .c6 { background: #ff7f7f; } .c7 { background: #a8020b; } .c8 { background: #991199; }
.row span.c3, .row span.c5, .row span.c6 { color: #000; }
.pens .hscroll { height: 30px; padding: 0 11px 0 9px; }
.pens .hscroll .thumb { width: 128px; margin: 0 auto 0 12px; }
.pens .vscroll { width: 32px; padding: 11px 0 43px; }
.pens .vscroll .thumb { height: 34px; margin: 8px 0 auto; }
.swatches { display: flex; gap: 4px; margin: 12px 0 0 10px; width: 386px; height: 40px; padding: 0 0 0 2px; background: linear-gradient(90deg, #fff 384px, transparent 0); }
.swatches i { width: 44px; height: 38px; border: 2px solid #0a78d7; box-shadow: inset 0 0 0 2px #fff, inset 0 0 0 4px #696969; }
.group { margin-left: 10px; width: 382px; height: 742px; border: 2px solid #a0a0a0; border-top: 0; box-shadow: inset 2px 0 #fff, 2px 2px #fff; padding: 24px 0 0 6px; }
.default { display: flex; line-height: 28px; height: 38px; padding-left: 4px; }
.default .box { margin-top: 1px; }
.param { display: flex; height: 42.200px; gap: 8px; margin-left: 4px; }
.param > span:first-child { width: 204px; height: 35px; margin-top: 4px; line-height: 35px; padding-left: 0; box-shadow: inset 2px 2px #a0a0a0, inset -2px -2px #fff; }
.param u { letter-spacing: -.200px; }
.param .field { width: 144px; display: flex; justify-content: space-between; padding: 4px 4px 4px 8px; line-height: 29px; margin-top: 0; }
.param.first { gap: 6px; }
.param.first .field { width: 152px; justify-content: flex-end; color: #000; padding-right: 10px; height: 40px; line-height: 32px; }
.spin { width: 32px; background: radial-gradient(circle at 50% 26%, #999 2px, transparent 3px), radial-gradient(circle at 50% 72%, #999 2px, transparent 3px), linear-gradient(transparent 11px, #a0a0a0 11px 13px, #696969 13px 15px, #fff 15px 17px, transparent 17px); box-shadow: inset -2px -2px #696969, inset 2px 2px #fff, inset -4px -4px #a0a0a0; }
.line { display: flex; height: 65px; }
.line .btn { height: 52px; }
.b1 { width: 162px; } .b2 { width: 160px; } .b3 { width: 198px; margin-left: 8px; } .b4 { width: 366px; } .b5 { width: 364px; }
.b3 tt { letter-spacing: 1px; font-size: 22px; }
.param + .line { margin-top: 13px; }
.penname { width: 130px; height: 48px; margin: 1px 0 0 9px; padding: 6px 6px; line-height: 28px; }

.status { height: 36px; flex: none; border-top: 2px solid #d7d7d7; background: #f0f0f0; display: grid; grid-template-columns: 1522px 373px 552px 263px 85px 83px; font: 26px/36px "Noto Sans", "Noto Sans CJK SC", sans-serif; }
.status span { border-left: 2px solid #d7d7d7; padding-left: 7px; }
.status span:nth-child(-n+2) { border-color: transparent; }
.status u { font-size: 22px; letter-spacing: -.200px; }

.brand { position: absolute; left: 2319px; top: 1506px; width: 469px; }
.brand b { display: block; height: 140px; margin-left: -4px; font: 900 118px/142px "Noto Sans CJK SC", sans-serif; color: #0094e1; }
.brand span { display: block; height: 62px; padding-left: 5px; background: #71c293; border-top: 4px solid #a9d8bd; color: #fff; font: 46px/48px "Noto Sans CJK SC", sans-serif; }
.watermark { position: absolute; left: 0; top: 0; }
.watermark text { font: 38px "Liberation Sans", sans-serif; fill: #000; fill-opacity: .085; }
```
FILE: script.js
```js
// Rulers, grid and work area of the drawing view (10 units = 100.7 px).
const OX = 1469, OY = 901, U = 10.07;
const snap = n => Math.round(n / 2) * 2;
const tickLen = v => v % 10 === 0 ? 16 : v % 5 === 0 ? 12 : 8;

let h = '', v = '', c = '';
for (let n = -94; n <= 94; n++) {
  const x = snap(OX + n * U) - 1;
  h += `<path d="M${x} 346v${-tickLen(n)}" stroke="#000" stroke-width="2"/>`;
  if (n % 10 === 0) {
    h += `<text x="${n < 0 ? x : n ? x + 1 : x + 4}" y="330" textLength="${n < 0 ? 42 : n ? 35 : 26}">${n.toFixed(1)}</text>`;
    if (n) c += `<path d="M${x} 348v1106" stroke="#ddd" stroke-width="2"/>`;
  }
}
for (let n = -54; n <= 54; n++) {
  const y = snap(OY - n * U) - 1;
  v += `<path d="M514 ${y}h${-tickLen(n)}" stroke="#000" stroke-width="2"/>`;
  if (n % 10 === 0) {
    const label = (n ? '' : '-') + n.toFixed(1);
    v += `<text transform="translate(482 ${y + 1}) rotate(90)" textLength="${n < 0 ? 39 : n ? 32 : 28}">${label}</text>`;
    if (n) c += `<path d="M516 ${y}h1906" stroke="#ddd" stroke-width="2"/>`;
  }
}
document.getElementById('hruler').innerHTML =
  '<path fill="#fff" d="M478 310h1974v38H478z"/><path d="M478 347h1974M515 310v38" stroke="#696969" stroke-width="2"/>' + h;
document.getElementById('vruler').innerHTML =
  '<path fill="#fff" d="M478 348h38v1136h-38z"/><path d="M515 348v1136" stroke="#696969" stroke-width="2"/>' + v;
document.getElementById('canvas').innerHTML =
  '<path fill="#fff" d="M516 348h1908v1108H516z"/>' + c +
  '<path d="M974 1409h1004v-1003" fill="none" stroke="#808080" stroke-width="7"/>' +
  '<path d="M965 397h1008v1008H965z" fill="none" stroke="#000" stroke-width="2"/>' +
  '<path d="M516 901h1906M1469 348v1106" stroke="#000018" stroke-width="2" stroke-dasharray="6 6"/>';
```
